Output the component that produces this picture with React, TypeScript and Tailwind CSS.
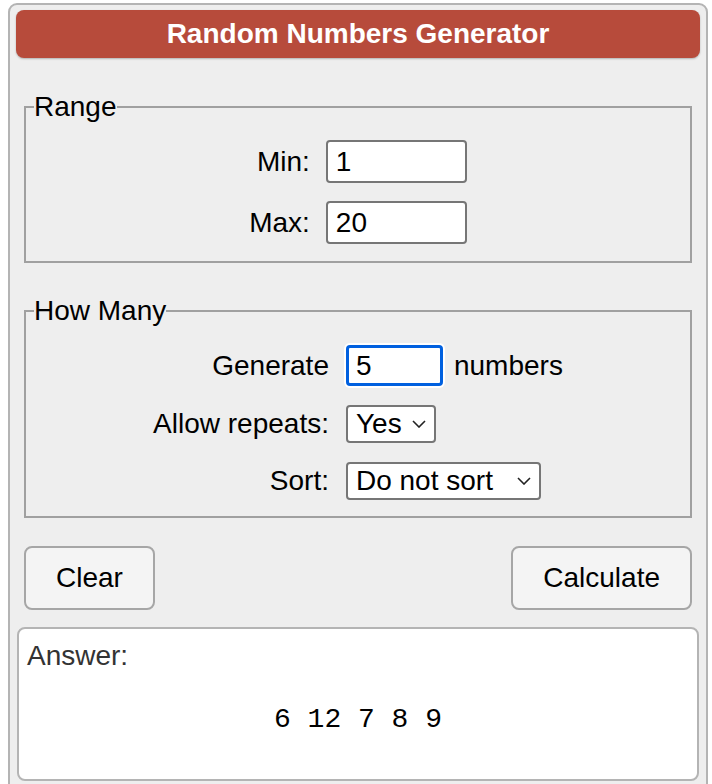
import React from 'react';

const Chevron = () => (
  <svg width="14" height="8" viewBox="0 0 14 8" className="pointer-events-none absolute right-[10px] top-1/2 -translate-y-1/2">
    <path d="M1 1l6 6 6-6" fill="none" stroke="#222" strokeWidth="1.6" />
  </svg>
);

const SelectBox = ({ value, width }: { value: string; width: string }) => (
  <div className={`relative ${width}`}>
    <select
      defaultValue={value}
      className="block appearance-none w-full h-[38px] bg-white border-2 border-[#767676] rounded-[4px] pl-[8px] pr-[30px] text-[28px] leading-none text-black"
    >
      <option>{value}</option>
    </select>
    <Chevron />
  </div>
);

const App = () => {
  return (
    <div className="font-['Liberation_Sans',Arial,sans-serif] text-[28px] leading-[32px] text-black bg-white pt-[3px] pl-[8px] w-[712px] h-[784px] overflow-hidden">
      <div className="w-[700px] h-[800px] bg-[#eeeeee] border-2 border-[#b4b4b4] rounded-[9px] px-[6px] pt-[5px]">
        {/* Title */}
        <div className="h-[48px] bg-[#b74b3b] rounded-[8px] shadow-[0_1px_2px_rgba(0,0,0,0.25)] flex items-center justify-center">
          <h1 className="text-white font-bold text-[28px]">Random Numbers Generator</h1>
        </div>

        {/* Range */}
        <fieldset className="mx-[8px] mt-[33px] border-2 border-[#a0a0a0] pb-[17px]">
          <legend className="ml-[8px]">Range</legend>
          <div className="grid grid-cols-[auto_auto] gap-x-[16px] gap-y-[18px] w-fit mx-auto items-center pt-[17px]">
            <label className="text-right">Min:</label>
            <input defaultValue="1" className="block w-[141px] h-[43px] bg-white border-2 border-[#767676] rounded-[4px] pl-[8px] text-[28px]" />
            <label className="text-right">Max:</label>
            <input defaultValue="20" className="block w-[141px] h-[43px] bg-white border-2 border-[#767676] rounded-[4px] pl-[8px] text-[28px]" />
          </div>
        </fieldset>

        {/* How Many */}
        <fieldset className="mx-[8px] mt-[32px] border-2 border-[#a0a0a0] pb-[16px]">
          <legend className="ml-[8px]">How Many</legend>
          <div className="grid grid-cols-[auto_auto] gap-x-[17px] gap-y-[19px] w-fit mx-auto items-center pt-[18px]">
            <label className="text-right">Generate</label>
            <div className="flex items-center gap-[11px]">
              <input defaultValue="5" className="block w-[97px] h-[41px] bg-white border-[3px] border-[#0060df] rounded-[4px] pl-[7px] text-[28px] outline-none ring-2 ring-white" />
              <span>numbers</span>
            </div>
            <label className="text-right">Allow repeats:</label>
            <SelectBox value="Yes" width="w-[90px]" />
            <label className="text-right">Sort:</label>
            <SelectBox value="Do not sort" width="w-[195px]" />
          </div>
        </fieldset>

        {/* Buttons */}
        <div className="flex justify-between mx-[8px] mt-[28px]">
          <button className="h-[64px] px-[30px] bg-[#f4f4f4] border-2 border-[#a6a6a6] rounded-[8px] text-[28px]">Clear</button>
          <button className="h-[64px] px-[30px] bg-[#f4f4f4] border-2 border-[#a6a6a6] rounded-[8px] text-[28px]">Calculate</button>
        </div>

        {/* Answer */}
        <div className="mt-[17px] mx-[1px] h-[154px] bg-white border-2 border-[#b4b4b4] rounded-[8px] px-[8px] pt-[11px]">
          <div className="text-[#333333]">Answer:</div>
          <div className="text-center font-['Liberation_Mono','Courier_New',monospace] mt-[32px]">6 12 7 8 9</div>
        </div>
      </div>
    </div>
  );
};

export default App;
